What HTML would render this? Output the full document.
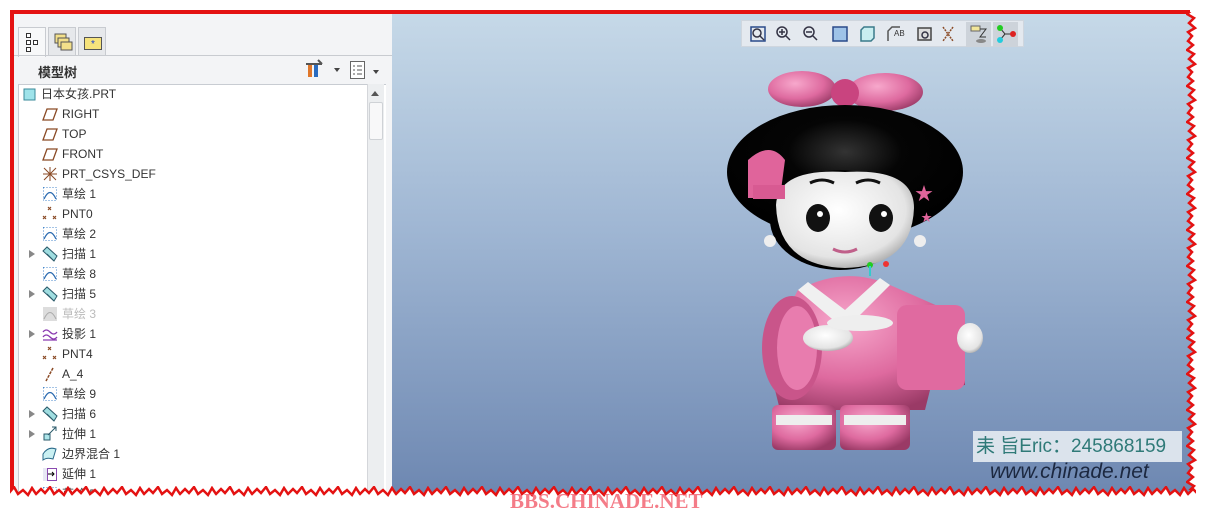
<!DOCTYPE html>
<html><head><meta charset="utf-8"><style>
*{margin:0;padding:0;box-sizing:border-box}
body{width:1218px;height:520px;overflow:hidden;background:#fff;position:relative;font-family:"Liberation Sans","Noto Sans CJK SC",sans-serif;font-size:12px;color:#333}
.abs{position:absolute}
#panel{left:12px;top:12px;width:381px;height:485px;background:#f3f4f6}
#view{left:392px;top:12px;width:803px;height:485px;background:linear-gradient(#c6d9e8,#9fb6d3 45%,#6d87b1)}
.tab{position:absolute;top:15px;height:28px;width:28px;border:1px solid #c8cbd0;border-bottom:none;background:#e6e8eb}
#tree{left:6px;top:72px;width:368px;height:413px;background:#fff;border:1px solid #c8ccd2;border-right:none}
.row{position:absolute;height:20px;line-height:20px;white-space:nowrap}
.row svg{position:absolute;top:2px;left:0}
.row span{position:absolute;left:20px}
.arr{position:absolute;width:0;height:0;border-left:6px solid #888;border-top:4px solid transparent;border-bottom:4px solid transparent;top:6px}
#sb{left:355px;top:72px;width:17px;height:413px;background:#eceef0;border-left:1px solid #d4d6da}
</style></head><body>
<div id="panel" class="abs">
 <div class="tab" style="left:6px;background:#f7f8f9;height:30px">
  <svg width="28" height="28"><g fill="#fff" stroke="#333" stroke-width="1"><rect x="7.5" y="5.5" width="4" height="4"/><rect x="7.5" y="12.5" width="4" height="4"/><rect x="14.5" y="12.5" width="4" height="4"/><rect x="7.5" y="19.5" width="4" height="4"/></g></svg></div>
 <div class="tab" style="left:36px"><svg width="28" height="28"><rect x="6" y="6" width="11" height="9" fill="#f3e08a" stroke="#555"/><rect x="9" y="10" width="11" height="9" fill="#f3e08a" stroke="#555"/><rect x="12" y="14" width="11" height="8" fill="#f3e08a" stroke="#555"/></svg></div>
 <div class="tab" style="left:66px"><svg width="28" height="28"><rect x="5.5" y="9.5" width="17" height="12" fill="#f6e37c" stroke="#555"/><text x="14" y="19" font-size="10" fill="#1a3fd0" text-anchor="middle">*</text></svg></div>
 <div class="abs" style="left:0;top:43px;width:381px;height:1px;background:#c8cbd0"></div>
 <div class="abs" style="left:26px;top:50px;font-weight:bold;font-size:13px;color:#333">模型树</div>
 <svg class="abs" style="left:292px;top:46px" width="90" height="24"><rect x="4" y="6" width="4" height="13" fill="#e0772a"/><rect x="10" y="6" width="4" height="13" fill="#2a6cc0"/><path d="M2 6h16M14 2l4 4" stroke="#555" stroke-width="2"/><path d="M30 10l6 0-3 4z" fill="#444"/><rect x="46.5" y="3.5" width="14" height="17" fill="#fff" stroke="#666"/><path d="M49 8h2M53 8h5M49 12h2M53 12h5M49 16h2M53 16h5" stroke="#555"/><path d="M69 12l6 0-3 4z" fill="#444"/></svg>
 <div id="tree" class="abs"></div>
 <div id="sb" class="abs"><div class="abs" style="left:3px;top:7px;border-left:4px solid transparent;border-right:4px solid transparent;border-bottom:5px solid #555"></div><div class="abs" style="left:1px;top:18px;width:14px;height:38px;background:#f8f8f9;border:1px solid #cfd2d6;border-radius:2px"></div></div>
</div>
<div id="rows" class="abs" style="left:0;top:0">
<div class="row" style="left:22px;top:84px"><svg width="16" height="16"><rect x="2" y="3" width="11" height="11" fill="#9ee3ea" stroke="#3a8a9a"/></svg><span style="left:19px">日本女孩.PRT</span></div>
<div class="row" style="left:42px;top:104px"><svg width="16" height="16"><path d="M5 3h10l-4 11H1z" fill="none" stroke="#8a4a25" stroke-width="1.3"/></svg><span>RIGHT</span></div>
<div class="row" style="left:42px;top:124px"><svg width="16" height="16"><path d="M5 3h10l-4 11H1z" fill="none" stroke="#8a4a25" stroke-width="1.3"/></svg><span>TOP</span></div>
<div class="row" style="left:42px;top:144px"><svg width="16" height="16"><path d="M5 3h10l-4 11H1z" fill="none" stroke="#8a4a25" stroke-width="1.3"/></svg><span>FRONT</span></div>
<div class="row" style="left:42px;top:164px"><svg width="16" height="16"><path d="M2 2l12 12M14 2L2 14M8 1v14M1 8h14" stroke="#8a4a25"/></svg><span>PRT_CSYS_DEF</span></div>
<div class="row" style="left:42px;top:184px"><svg width="16" height="16"><rect x="1.5" y="1.5" width="13" height="13" fill="none" stroke="#4a8acc" stroke-dasharray="1 2"/><path d="M2 13Q8 0 14 13" fill="none" stroke="#2a6ab0" stroke-width="1.3"/></svg><span>草绘 1</span></div>
<div class="row" style="left:42px;top:204px"><svg width="16" height="16"><path d="M6 1l3 3M9 1L6 4M1 10l3 3M4 10l-3 3M11 10l3 3M14 10l-3 3" stroke="#8a4a25" stroke-width="1.2"/></svg><span>PNT0</span></div>
<div class="row" style="left:42px;top:224px"><svg width="16" height="16"><rect x="1.5" y="1.5" width="13" height="13" fill="none" stroke="#4a8acc" stroke-dasharray="1 2"/><path d="M2 13Q8 0 14 13" fill="none" stroke="#2a6ab0" stroke-width="1.3"/></svg><span>草绘 2</span></div>
<div class="row" style="left:42px;top:244px"><i class="arr" style="left:-13px"></i><svg width="16" height="16"><path d="M1 5l4-4 10 9-3 5z" fill="#9fdde0" stroke="#2a5a6a"/><path d="M5 8l7 7" stroke="#2a5a6a"/></svg><span>扫描 1</span></div>
<div class="row" style="left:42px;top:264px"><svg width="16" height="16"><rect x="1.5" y="1.5" width="13" height="13" fill="none" stroke="#4a8acc" stroke-dasharray="1 2"/><path d="M2 13Q8 0 14 13" fill="none" stroke="#2a6ab0" stroke-width="1.3"/></svg><span>草绘 8</span></div>
<div class="row" style="left:42px;top:284px"><i class="arr" style="left:-13px"></i><svg width="16" height="16"><path d="M1 5l4-4 10 9-3 5z" fill="#9fdde0" stroke="#2a5a6a"/><path d="M5 8l7 7" stroke="#2a5a6a"/></svg><span>扫描 5</span></div>
<div class="row" style="left:42px;top:304px;color:#bbb"><svg width="16" height="16"><rect x="1" y="1" width="14" height="14" fill="#ddd"/><path d="M2 13Q8 0 14 13" fill="none" stroke="#aaa"/></svg><span>草绘 3</span></div>
<div class="row" style="left:42px;top:324px"><i class="arr" style="left:-13px"></i><svg width="16" height="16"><path d="M1 6q3-4 7 0t7 0M1 11q3-4 7 0t7 0M1 14h14" fill="none" stroke="#8a3ab0" stroke-width="1.3"/></svg><span>投影 1</span></div>
<div class="row" style="left:42px;top:344px"><svg width="16" height="16"><path d="M6 1l3 3M9 1L6 4M1 10l3 3M4 10l-3 3M11 10l3 3M14 10l-3 3" stroke="#8a4a25" stroke-width="1.2"/></svg><span>PNT4</span></div>
<div class="row" style="left:42px;top:364px"><svg width="16" height="16"><path d="M11 2L4 15" stroke="#8a4a25" stroke-width="1.5" stroke-dasharray="3 1"/></svg><span>A_4</span></div>
<div class="row" style="left:42px;top:384px"><svg width="16" height="16"><rect x="1.5" y="1.5" width="13" height="13" fill="none" stroke="#4a8acc" stroke-dasharray="1 2"/><path d="M2 13Q8 0 14 13" fill="none" stroke="#2a6ab0" stroke-width="1.3"/></svg><span>草绘 9</span></div>
<div class="row" style="left:42px;top:404px"><i class="arr" style="left:-13px"></i><svg width="16" height="16"><path d="M1 5l4-4 10 9-3 5z" fill="#9fdde0" stroke="#2a5a6a"/><path d="M5 8l7 7" stroke="#2a5a6a"/></svg><span>扫描 6</span></div>
<div class="row" style="left:42px;top:424px"><i class="arr" style="left:-13px"></i><svg width="16" height="16"><rect x="2" y="8" width="6" height="6" fill="#aee6ea" stroke="#2a5a6a"/><path d="M6 9l8-8M10 1h4v4" fill="none" stroke="#2a5a6a"/></svg><span>拉伸 1</span></div>
<div class="row" style="left:42px;top:444px"><svg width="16" height="16"><path d="M1 8q5-8 13-5l-3 10q-6-2-10 1z" fill="#c9f0f2" stroke="#2a6a8a"/></svg><span>边界混合 1</span></div>
<div class="row" style="left:42px;top:464px"><svg width="16" height="16"><rect x="1" y="2" width="14" height="13" fill="#e8e8f4"/><rect x="5.5" y="2.5" width="9" height="12" fill="#fff" stroke="#8a4ab0"/><path d="M6 8h6M10 6l2 2-2 2" stroke="#000" fill="none"/></svg><span>延伸 1</span></div>
<div class="row" style="left:42px;top:484px"><svg width="16" height="16"><rect x="1.5" y="1.5" width="13" height="13" fill="none" stroke="#4a8acc" stroke-dasharray="1 2"/></svg><span>草绘 5</span></div>
</div>
<div id="view" class="abs">
 <div class="abs" style="left:349px;top:8px;width:283px;height:27px;background:#e4e9ef;border:1px solid #cfd6de">
  <svg width="283" height="27">
   <g fill="none" stroke="#334" stroke-width="1.5">
    <rect x="9" y="6" width="14" height="14" stroke="#2a4a8a"/><circle cx="15" cy="12" r="4"/><path d="M18 15l4 4"/>
    <circle cx="40" cy="11" r="5"/><path d="M44 15l4 4M37 11h6M40 8v6"/>
    <circle cx="67" cy="11" r="5"/><path d="M71 15l4 4M64 11h6"/>
    <rect x="91" y="6" width="14" height="14" stroke="#2a4a8a" fill="#9ec3e8"/>
    <path d="M119 9l3-3h10v11l-3 3h-10z" stroke="#3a7a8a" fill="#c8eef0"/>
    <path d="M146 20v-10l4-4h8" stroke="#555"/><text x="152" y="15" font-size="8" fill="#333" stroke="none">AB</text>
    <rect x="176" y="7" width="13" height="12" fill="#ddd" stroke="#444"/><circle cx="183" cy="14" r="3"/>
    <path d="M201 6l10 14M211 6l-10 14" stroke="#8a4a25" stroke-dasharray="2 1"/>
   </g>
   <rect x="224" y="1" width="25" height="25" fill="#cdd3da"/><rect x="229" y="5" width="9" height="5" fill="#f2e69a" stroke="#666"/><path d="M238 8h6l-6 8h6" stroke="#333" fill="none"/><ellipse cx="239" cy="20" rx="5" ry="2" fill="#888"/>
   <rect x="251" y="1" width="25" height="25" fill="#cdd3da"/><path d="M258 7l5 6h8M263 13l-5 6" stroke="#333" fill="none"/><circle cx="258" cy="7" r="3" fill="#2c2"/><circle cx="271" cy="13" r="3" fill="#d22"/><circle cx="258" cy="19" r="3" fill="#2cd"/>
  </svg>
 </div>
 <svg class="abs" style="left:0;top:0" width="803" height="485">
  <defs>
   <radialGradient id="pk" cx=".4" cy=".35" r=".7"><stop offset="0" stop-color="#f7a8cc"/><stop offset=".6" stop-color="#de6a9f"/><stop offset="1" stop-color="#9a3a66"/></radialGradient>
   <radialGradient id="wh" cx=".45" cy=".4" r=".7"><stop offset="0" stop-color="#fff"/><stop offset=".7" stop-color="#e4e4e4"/><stop offset="1" stop-color="#8c8c8c"/></radialGradient>
   <radialGradient id="bk" cx=".5" cy=".35" r=".6"><stop offset="0" stop-color="#333"/><stop offset=".4" stop-color="#050505"/><stop offset="1" stop-color="#000"/></radialGradient>
  </defs>
  <g transform="translate(-392,-12)">
   <ellipse cx="802" cy="89" rx="34" ry="18" fill="url(#pk)"/>
   <ellipse cx="885" cy="92" rx="38" ry="19" fill="url(#pk)"/>
   <circle cx="845" cy="93" r="14" fill="#c9447f"/>
   <ellipse cx="845" cy="172" rx="118" ry="67" fill="url(#bk)"/>
   <ellipse cx="840" cy="220" rx="70" ry="50" fill="url(#bk)"/>
   <path d="M776 205 Q778 168 845 172 Q914 168 914 208 Q912 266 845 268 Q778 266 776 205z" fill="url(#wh)"/>
   <path d="M748 160 Q770 140 785 160 L780 198 L748 198z" fill="#e0649b"/>
   <rect x="753" y="185" width="32" height="14" fill="#d85a92"/>
   <circle cx="770" cy="241" r="6" fill="#eee"/><circle cx="920" cy="241" r="6" fill="#eee"/>
   <path d="M810 183q12-6 24 0M856 183q12-6 24 0" stroke="#111" stroke-width="3" fill="none"/>
   <ellipse cx="818" cy="218" rx="12" ry="14" fill="#111"/><ellipse cx="881" cy="218" rx="12" ry="14" fill="#111"/>
   <circle cx="820" cy="214" r="3" fill="#fff"/><circle cx="884" cy="214" r="3" fill="#fff"/>
   <path d="M833 249q12 6 24 0" stroke="#c0608a" stroke-width="3" fill="none"/>
   <text x="915" y="200" font-size="18" fill="#e0649b">★</text><text x="921" y="221" font-size="11" fill="#e0649b">★</text>
   <path d="M798 290 Q845 265 890 285 L965 318 L965 385 L930 390 L925 410 L780 410 L765 350 Z" fill="url(#pk)"/>
   <path d="M798 290 L845 330 L890 285 L880 278 L845 310 L808 282z" fill="#f0f0f0"/>
   <ellipse cx="792" cy="348" rx="30" ry="52" fill="#c9558a"/>
   <ellipse cx="797" cy="348" rx="20" ry="42" fill="#e87cae"/>
   <rect x="897" y="305" width="68" height="85" rx="10" fill="#e06aa0"/>
   <ellipse cx="970" cy="338" rx="13" ry="15" fill="url(#wh)"/>
   <ellipse cx="828" cy="338" rx="25" ry="13" fill="url(#wh)"/>
   <ellipse cx="860" cy="323" rx="33" ry="8" fill="#eee"/>
   <rect x="772" y="405" width="64" height="45" rx="6" fill="url(#pk)"/><rect x="840" y="405" width="70" height="45" rx="6" fill="url(#pk)"/>
   <rect x="776" y="415" width="56" height="10" fill="#eee"/><rect x="844" y="415" width="62" height="10" fill="#eee"/>
   <circle cx="870" cy="265" r="3" fill="#2c2"/><circle cx="886" cy="264" r="3" fill="#e33"/><path d="M870 266v10" stroke="#3cc" stroke-width="2"/>
  </g>
 </svg>
 <div class="abs" style="left:581px;top:419px;width:209px;height:31px;background:#dbe3ec;color:#2f7a78;font-size:19px;line-height:31px;padding-left:3px;white-space:nowrap;overflow:hidden">耒 旨Eric：245868159</div>
 <div class="abs" style="left:598px;top:448px;font-size:21px;font-style:italic;color:#1c2840">www.chinade.net</div>
</div>
<div class="abs" style="left:10px;top:10px;width:1190px;height:4px;background:#e41212"></div>
<div class="abs" style="left:10px;top:10px;width:4px;height:490px;background:#e41212"></div>
<svg class="abs" style="left:0;top:0" width="1218" height="520">
 <defs>
  <pattern id="zb" x="0" y="486" width="36" height="34" patternUnits="userSpaceOnUse"><path d="M0 8L5 3 9 7 14 1 18 8 23 4 28 9 32 2 36 8V34H0z" fill="#fff"/><path d="M-1 9L0 8 5 3 9 7 14 1 18 8 23 4 28 9 32 2 36 8 37 9" fill="none" stroke="#e41212" stroke-width="2.5"/></pattern>
  <pattern id="zr" x="1186" y="0" width="32" height="36" patternUnits="userSpaceOnUse"><path d="M6 0L2 5 7 9 1 14 8 18 3 23 9 28 2 32 6 36H32V0z" fill="#fff"/><path d="M7 -1L6 0 2 5 7 9 1 14 8 18 3 23 9 28 2 32 6 36 7 37" fill="none" stroke="#e41212" stroke-width="2.5"/></pattern>
 </defs>
 <rect x="1186" y="12" width="32" height="478" fill="url(#zr)"/>
 <rect x="10" y="486" width="1190" height="34" fill="url(#zb)"/>
 <rect x="1196" y="486" width="22" height="34" fill="#fff"/>
 <rect x="1190" y="0" width="28" height="12" fill="#fff"/>
 <text x="510" y="508" font-family="Liberation Serif,serif" font-weight="bold" font-size="21" fill="#f05060" fill-opacity=".75">BBS.CHINADE.NET</text>
</svg>
</body></html>
